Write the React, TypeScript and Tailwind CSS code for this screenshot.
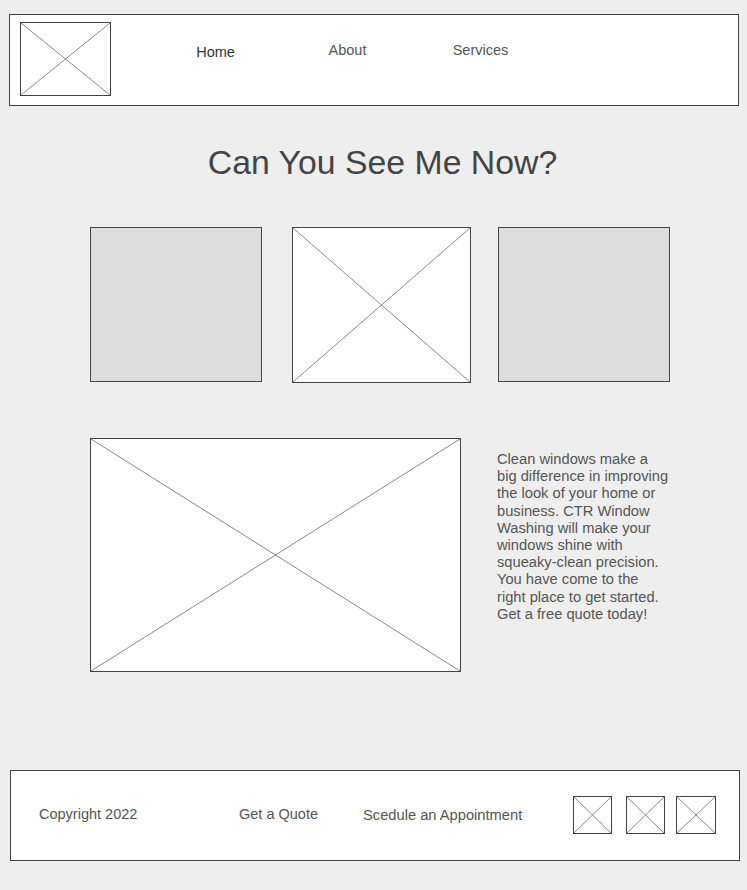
import React from 'react';

// Wireframe placeholder: box with an X drawn corner to corner
function Placeholder({ className = '' }: { className?: string }) {
  return (
    <div className={`border border-[#444] bg-white ${className}`}>
      <svg className="w-full h-full block" viewBox="0 0 100 100" preserveAspectRatio="none">
        <line x1="0" y1="0" x2="100" y2="100" stroke="#8a8a8a" strokeWidth={1} vectorEffect="non-scaling-stroke" />
        <line x1="100" y1="0" x2="0" y2="100" stroke="#8a8a8a" strokeWidth={1} vectorEffect="non-scaling-stroke" />
      </svg>
    </div>
  );
}

const NAV = [
  { label: 'Home',     cls: 'w-[131px] text-[#333] mt-[30px]' },
  { label: 'About',    cls: 'w-[133px] text-[#555] mt-[28px]' },
  { label: 'Services', cls: 'w-[133px] text-[#555] mt-[28px]' },
];

export default function App() {
  return (
    <div className="w-[747px] min-h-[890px] bg-[#eeeeee] pt-[14px] pb-[29px] font-['Liberation_Sans',Arial,sans-serif] text-[#555]">

      {/* Header */}
      <header className="ml-[9px] w-[730px] h-[92px] border border-[#444] bg-white flex">
        <Placeholder className="ml-[10px] mt-[7px] w-[91px] h-[74px] shrink-0" />
        <nav className="flex ml-[39px]">
          {NAV.map(item => (
            <a key={item.label} href="#" className={`text-center text-[14.5px] leading-none ${item.cls}`}>
              {item.label}
            </a>
          ))}
        </nav>
      </header>

      {/* Title */}
      <h1 className="mt-[37px] pl-[18px] text-center text-[33.8px] leading-[38px] text-[#444]">
        Can You See Me Now?
      </h1>

      {/* Gallery row */}
      <div className="mt-[46px] ml-[90px] flex items-start">
        <div className="w-[172px] h-[155px] border border-[#444] bg-[#dddddd]" />
        <Placeholder className="ml-[30px] w-[179px] h-[156px]" />
        <div className="ml-[27px] w-[172px] h-[155px] border border-[#444] bg-[#dddddd]" />
      </div>

      {/* Feature row */}
      <div className="mt-[55px] ml-[90px] flex items-start">
        <Placeholder className="w-[371px] h-[234px]" />
        <p className="ml-[36px] mt-[13px] w-[174px] text-[14.7px] leading-[17.2px] text-[#555]">
          Clean windows make a big difference in improving the look of your home or business. CTR Window
          Washing will make your windows shine with squeaky-clean precision. You have come to the right place
          to get started. Get a free quote today!
        </p>
      </div>

      {/* Footer */}
      <footer className="mt-[98px] ml-[10px] w-[730px] h-[91px] pb-[2px] border border-[#444] bg-white flex items-center text-[14.5px] text-[#555]">
        <span className="ml-[28px] w-[200px]">Copyright 2022</span>
        <a href="#" className="w-[124px]">Get a Quote</a>
        <a href="#" className="mt-[2px] text-[14.7px]">Scedule an Appointment</a>
        <div className="ml-auto mr-[23px] flex items-center gap-[14px]">
          <Placeholder className="w-[39px] h-[38px]" />
          <Placeholder className="w-[39px] h-[38px]" />
          <Placeholder className="-ml-[3px] w-[40px] h-[38px]" />
        </div>
      </footer>
    </div>
  );
}
